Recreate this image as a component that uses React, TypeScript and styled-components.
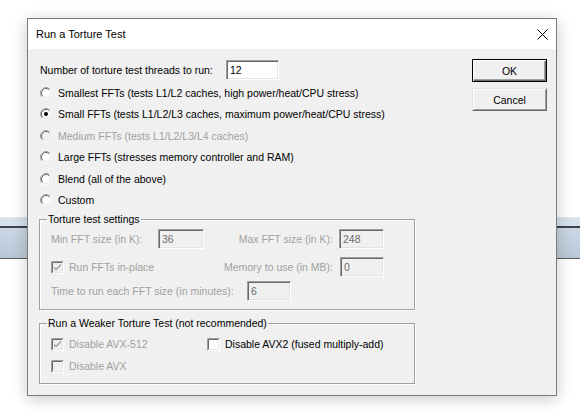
import * as React from 'react';
import styled, { createGlobalStyle } from 'styled-components';

const GlobalStyle = createGlobalStyle`
    * {
        box-sizing: border-box;
    }
    html, body {
        margin: 0;
        padding: 0;
        background: #fff;
    }
    body {
        font-family: 'Liberation Sans', Arial, sans-serif;
        font-size: 10.5px;
        color: #000;
    }
`;

const Desktop = styled.div`
    position: relative;
    width: 580px;
    height: 418px;
    overflow: hidden;
    background: #fff;
    padding-top: 217px;
`;

const Strip = styled.div`
    height: 42px;
    border-top: 1px solid #e4e7ea;
    background: linear-gradient(
        #d5e1ed 0, #d5e1ed 8px,
        #3e4246 8px, #3e4246 10px,
        #cad8e6 10px, #b8c7d5 40px,
        #5a5d60 40px
    );
`;

// the dialog floats over the desktop like a window
const Dialog = styled.div`
    position: absolute;
    left: 27px;
    top: 18px;
    width: 530px;
    height: 378px;
    border: 1px solid #7c7c7c;
    background: #f0f0f0;
    box-shadow: 0 3px 14px rgba(0, 0, 0, 0.22);
    display: flex;
    flex-direction: column;
`;

const TitleBar = styled.div`
    height: 30px;
    background: #fff;
    display: flex;
    align-items: center;
    justify-content: space-between;
    padding: 0 8px 0 8px;
    font-size: 11px;
`;

const CloseBox = styled.div`
    width: 11px;
    height: 11px;
    display: flex;
`;

const Body = styled.div`
    flex: 1;
    display: flex;
    padding: 10px 9px 0 11px;
`;

const Main = styled.div`
    width: 376px;
    display: flex;
    flex-direction: column;
`;

const ThreadsRow = styled.div`
    display: flex;
    align-items: flex-start;
    height: 22px;
    margin-top: 1px;
    padding-left: 1px;
`;

const FixedLabel = styled.span<{ $w: number; $disabled?: boolean }>`
    width: ${p => p.$w}px;
    flex: none;
    height: 20px;
    line-height: 20px;
    white-space: nowrap;
    color: ${p => (p.$disabled ? '#a0a0a0' : '#000')};
`;

const RightLabel = styled.span<{ $pad: number }>`
    flex: 1;
    text-align: right;
    padding-right: ${p => p.$pad}px;
    height: 20px;
    line-height: 20px;
    white-space: nowrap;
    color: #a0a0a0;
`;

const Edit = styled.div<{ $w: number; $disabled?: boolean }>`
    width: ${p => p.$w}px;
    height: 20px;
    flex: none;
    padding: 0 3px;
    line-height: 19px;
    background: ${p => (p.$disabled ? '#f0f0f0' : '#fff')};
    color: ${p => (p.$disabled ? '#6d6d6d' : '#000')};
    border-top: 1px solid #a0a0a0;
    border-left: 1px solid #a0a0a0;
    border-bottom: 1px solid #fff;
    border-right: 1px solid #fff;
    box-shadow: inset 1px 1px 0 #696969, inset -1px -1px 0 #e3e3e3;
`;

const RadioRow = styled.label<{ $disabled?: boolean }>`
    display: flex;
    align-items: center;
    gap: 6px;
    height: 21.5px;
    padding-left: 1px;
    white-space: nowrap;
    color: ${p => (p.$disabled ? '#a0a0a0' : '#000')};
`;

const Group = styled.div<{ $top: number }>`
    margin-top: ${p => p.$top}px;
    border: 1px solid #a0a0a0;
    box-shadow: 1px 1px 0 #fff, inset 1px 1px 0 #fff;
    display: flex;
    flex-direction: column;
    padding: 0 30px 0 11px;
`;

const Legend = styled.div`
    align-self: flex-start;
    height: 13px;
    line-height: 13px;
    margin: -7px 0 0 -4px;
    padding: 0 1px;
    background: #f0f0f0;
    white-space: nowrap;
`;

const Row = styled.div<{ $top: number; $h?: number }>`
    display: flex;
    align-items: center;
    margin-top: ${p => p.$top}px;
    height: ${p => p.$h ?? 20}px;
`;

const CheckItem = styled.label<{ $w?: number; $disabled?: boolean }>`
    display: flex;
    align-items: center;
    gap: 5px;
    ${p => (p.$w ? `width: ${p.$w}px; flex: none;` : 'flex: 1;')}
    white-space: nowrap;
    color: ${p => (p.$disabled ? '#a0a0a0' : '#000')};
`;

const Buttons = styled.div`
    margin-left: auto;
    display: flex;
    flex-direction: column;
    gap: 6px;
`;

const Button = styled.button<{ $default?: boolean }>`
    width: 75px;
    height: 23px;
    padding: 0;
    font-family: 'Liberation Sans', Arial, sans-serif;
    font-size: 10.5px;
    color: #000;
    background: #f0f0f0;
    border: 1px solid ${p => (p.$default ? '#000' : '#e3e3e3')};
    box-shadow: ${p =>
        p.$default
            ? 'inset 1px 1px 0 #fff, inset -1px -1px 0 #696969, inset -2px -2px 0 #a0a0a0'
            : 'inset 1px 1px 0 #fff, inset -1px -1px 0 #a0a0a0'};
    ${p => (p.$default ? '' : 'border-right-color: #696969; border-bottom-color: #696969;')}
`;

const Radio = ({ checked, disabled }: { checked?: boolean; disabled?: boolean }) => (
    <svg width="12" height="12" viewBox="0 0 12 12">
        <circle cx="6" cy="6" r="4" fill={disabled ? '#f0f0f0' : '#fff'} />
        <path d="M2.11 9.89A5.5 5.5 0 0 1 9.89 2.11" fill="none" stroke="#a0a0a0" />
        <path d="M9.89 2.11A5.5 5.5 0 0 1 2.11 9.89" fill="none" stroke="#fff" />
        <path d="M2.82 9.18A4.5 4.5 0 0 1 9.18 2.82" fill="none" stroke="#696969" />
        <path d="M9.18 2.82A4.5 4.5 0 0 1 2.82 9.18" fill="none" stroke="#e3e3e3" />
        {checked && <circle cx="6" cy="6" r="2" fill={disabled ? '#a0a0a0' : '#000'} />}
    </svg>
);

const Check = ({ checked, disabled }: { checked?: boolean; disabled?: boolean }) => (
    <svg width="13" height="13" viewBox="0 0 13 13">
        <rect x="0" y="0" width="13" height="13" fill="#fff" />
        <path d="M0.5 12.5V0.5H12.5" fill="none" stroke="#a0a0a0" />
        <path d="M1.5 11.5V1.5H11.5" fill="none" stroke="#696969" />
        <path d="M2.5 11.5H11.5V2.5" fill="none" stroke="#e3e3e3" />
        <rect x="2" y="2" width="9" height="9" fill={disabled ? '#f0f0f0' : '#fff'} />
        {checked && (
            <path
                d="M3 5.5L5 7.5L10 2.5V4.5L5 9.5L3 7.5Z"
                fill={disabled ? '#a0a0a0' : '#000'}
            />
        )}
    </svg>
);

const CloseIcon = () => (
    <svg width="11" height="11" viewBox="0 0 11 11">
        <path d="M0.5 0.5L10.5 10.5M10.5 0.5L0.5 10.5" stroke="#000" strokeWidth="1" />
    </svg>
);

const radios = [
    { text: 'Smallest FFTs (tests L1/L2 caches, high power/heat/CPU stress)' },
    { text: 'Small FFTs (tests L1/L2/L3 caches, maximum power/heat/CPU stress)', checked: true },
    { text: 'Medium FFTs (tests L1/L2/L3/L4 caches)', disabled: true },
    { text: 'Large FFTs (stresses memory controller and RAM)' },
    { text: 'Blend (all of the above)' },
    { text: 'Custom' },
];

export default function App() {
    return (
        <>
            <GlobalStyle />
            <Desktop>
                <Strip />
                <Dialog>
                    <TitleBar>
                        <span>Run a Torture Test</span>
                        <CloseBox>
                            <CloseIcon />
                        </CloseBox>
                    </TitleBar>
                    <Body>
                        <Main>
                            <ThreadsRow>
                                <FixedLabel $w={186}>Number of torture test threads to run:</FixedLabel>
                                <Edit $w={53}>12</Edit>
                            </ThreadsRow>
                            {radios.map(r => (
                                <RadioRow key={r.text} $disabled={r.disabled}>
                                    <Radio checked={r.checked} disabled={r.disabled} />
                                    <span>{r.text}</span>
                                </RadioRow>
                            ))}

                            <Group $top={8}>
                                <Legend>Torture test settings</Legend>
                                <Row $top={3}>
                                    <FixedLabel $w={107} $disabled>Min FFT size (in K):</FixedLabel>
                                    <Edit $w={46} $disabled>36</Edit>
                                    <RightLabel $pad={6}>Max FFT size (in K):</RightLabel>
                                    <Edit $w={45} $disabled>248</Edit>
                                </Row>
                                <Row $top={8}>
                                    <CheckItem $disabled>
                                        <Check checked disabled />
                                        <span>Run FFTs in-place</span>
                                    </CheckItem>
                                    <RightLabel $pad={7}>Memory to use (in MB):</RightLabel>
                                    <Edit $w={44} $disabled>0</Edit>
                                </Row>
                                <Row $top={4}>
                                    <FixedLabel $w={196} $disabled>Time to run each FFT size (in minutes):</FixedLabel>
                                    <Edit $w={44} $disabled>6</Edit>
                                </Row>
                                <Row $top={8} $h={0} />
                            </Group>

                            <Group $top={13}>
                                <Legend>Run a Weaker Torture Test (not recommended)</Legend>
                                <Row $top={3} $h={22}>
                                    <CheckItem $w={156} $disabled>
                                        <Check checked disabled />
                                        <span>Disable AVX-512</span>
                                    </CheckItem>
                                    <CheckItem>
                                        <Check />
                                        <span>Disable AVX2 (fused multiply-add)</span>
                                    </CheckItem>
                                </Row>
                                <Row $top={0} $h={22}>
                                    <CheckItem $w={156} $disabled>
                                        <Check disabled />
                                        <span>Disable AVX</span>
                                    </CheckItem>
                                </Row>
                                <Row $top={6} $h={0} />
                            </Group>
                        </Main>
                        <Buttons>
                            <Button $default>OK</Button>
                            <Button>Cancel</Button>
                        </Buttons>
                    </Body>
                </Dialog>
            </Desktop>
        </>
    );
}
